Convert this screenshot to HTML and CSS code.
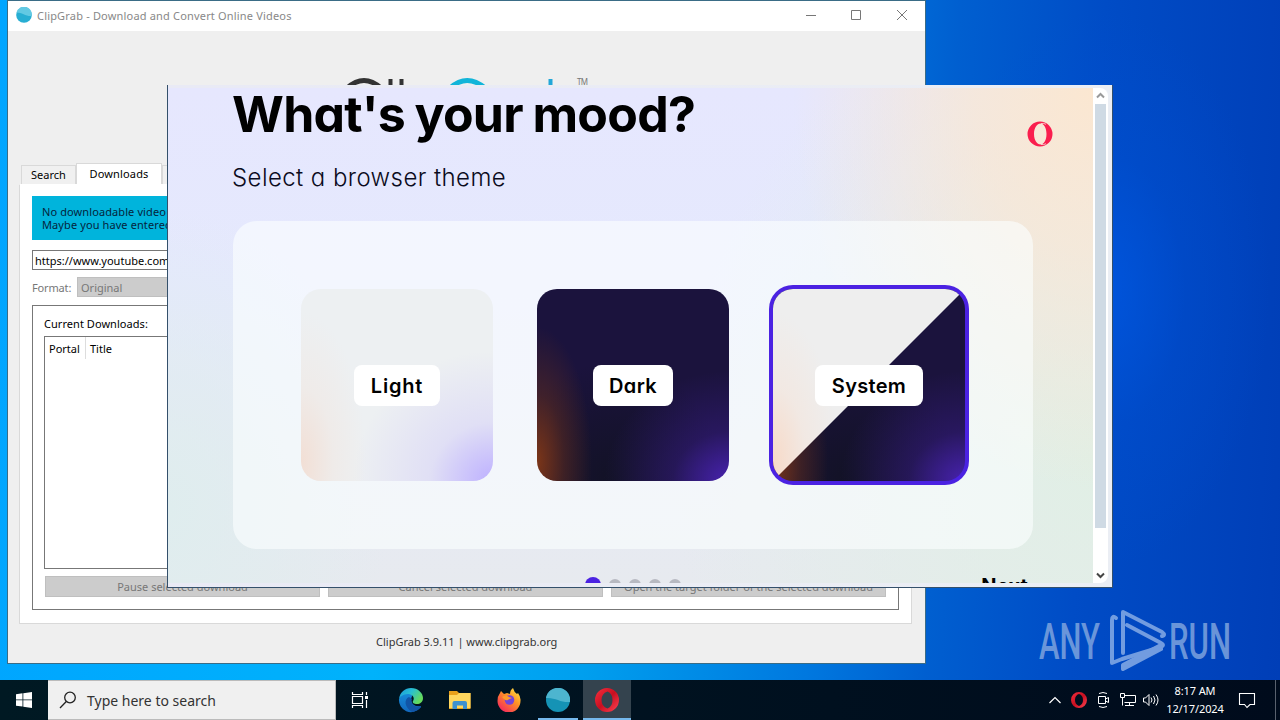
FILE: index.html
```html
<!DOCTYPE html>
<html lang="en">
<head>
    <meta charset="UTF-8">
    <meta name="viewport" content="width=device-width, initial-scale=1.0">
    <title>Desktop</title>
    <link rel="stylesheet" href="styles.css">
</head>
<body>

    <main class="desktop">

        <!-- ClipGrab window -->
        <section class="clipgrab">
            <header class="titlebar">
                <svg class="app-icon" width="16" height="16" viewBox="0 0 16 16">
                    <circle cx="8" cy="8" r="7.8" fill="#27aed3"/>
                    <path d="M.5 5.500A7.800 7.800 0 0 1 15.700 9C10 9.500 6 5.500 .5 5.500z" fill="#62c9e3"/>
                </svg>
                <span class="title-text">ClipGrab - Download and Convert Online Videos</span>
                <svg class="controls" width="110" height="16" viewBox="0 0 110 16" fill="none" stroke="#777">
                    <path d="M1 8.500h10M46.500 3.500h9v9h-9zM92 3l10 10M102 3l-10 10"/>
                </svg>
            </header>

            <div class="logo">
                <svg width="260" height="60" viewBox="0 0 260 60">
                    <g fill="none" stroke-width="5">
                        <path d="M12 14Q29 -1 46 14" stroke="#333"/>
                        <path d="M55.500 5v20M66.500 5v20" stroke="#333" stroke-width="4"/>
                        <path d="M115 14Q132 -1 150 14" stroke="#12b5d9"/>
                        <path d="M215.500 5v20" stroke="#22a7d8" stroke-width="4"/>
                    </g>
                    <text class="tm" x="242" y="11" textLength="11">TM</text>
                </svg>
            </div>

            <nav class="tabs">
                <span class="tab tab-search">Search</span>
                <span class="tab active">Downloads</span>
                <span class="tab tab-last"></span>
            </nav>

            <div class="pane">
                <div class="notice">No downloadable video could be found.<br>Maybe you have entered the wrong link?</div>
                <div class="url">https://www.youtube.com</div>
                <div class="format">
                    <span class="format-label">Format:</span>
                    <span class="select">Original</span>
                </div>
                <div class="group">
                    <p class="group-title">Current Downloads:</p>
                    <div class="list">
                        <span class="col portal">Portal</span>
                        <span class="col">Title</span>
                    </div>
                    <div class="actions">
                        <span class="action">Pause selected download</span>
                        <span class="action">Cancel selected download</span>
                        <span class="action">Open the target folder of the selected download</span>
                    </div>
                </div>
            </div>

            <footer class="about">ClipGrab 3.9.11 | www.clipgrab.org</footer>
        </section>

        <!-- Opera welcome window -->
        <section class="opera">
            <div class="page">
                <div class="page-head">
                    <div>
                        <h1>What's your mood?</h1>
                        <h2>Select a browser theme</h2>
                    </div>
                    <svg class="opera-logo" width="26" height="26" viewBox="0 0 26 26">
                        <path fill="#fa1e4e" fill-rule="evenodd" d="M13 .5a12.500 12.500 0 1 0 0 25a12.500 12.500 0 1 0 0-25zM13.500 2.500c3.400 0 6 4.500 6 10.500s-2.600 10.500-6 10.500S7 19 7 13 10.100 2.500 13.500 2.500z"/>
                        <path d="M14 2.500q3-.5 5 .8M14 23.500q3 .5 5-.8" fill="none" stroke="#f3e9dc" stroke-width=".8"/>
                    </svg>
                </div>
                <div class="themes">
                    <div class="theme light"><span class="name">Light</span></div>
                    <div class="theme dark"><span class="name">Dark</span></div>
                    <div class="theme system"><span class="name">System</span></div>
                </div>
                <div class="page-foot">
                    <div class="dots">
                        <i class="dot current"></i><i class="dot"></i><i class="dot"></i><i class="dot"></i><i class="dot"></i>
                    </div>
                    <span class="next">Next</span>
                </div>
            </div>
            <div class="scrollbar">
                <svg width="15" height="15" viewBox="0 0 15 15" fill="none" stroke="#999" stroke-width="2"><path d="M4 9.500l3.500-3.500L11 9.500"/></svg>
                <div class="thumb"></div>
                <svg width="15" height="15" viewBox="0 0 15 15" fill="none" stroke="#444" stroke-width="2"><path d="M4 5.500L7.500 9 11 5.500"/></svg>
            </div>
        </section>

        <!-- Watermark -->
        <svg class="watermark" width="196" height="66" viewBox="0 0 196 66">
            <g class="brand">
                <text transform="translate(2 51) scale(.58 1)" textLength="105" lengthAdjust="spacingAndGlyphs">ANY</text>
                <text transform="translate(132 51) scale(.58 1)" textLength="107" lengthAdjust="spacingAndGlyphs">RUN</text>
            </g>
            <g fill="none" stroke="#8fb2e8" stroke-width="4" stroke-linejoin="round" stroke-linecap="round" opacity=".8">
                <path d="M79 10q-4-3-4 2v43l10-4L124 39q4-2 0-4L90 17"/>
                <path d="M86 45V4l39 20q4 3 0 4"/>
                <path d="M124 41L86 61v-4l38-20"/>
            </g>
        </svg>
    </main>

    <!-- Taskbar -->
    <footer class="taskbar">
        <div class="start">
            <svg width="16" height="16" viewBox="0 0 16 16" fill="#fff"><path d="M0 2.200l6.500-.9v6.200H0zM7.300 1.200L16 0v7.500H7.300zM0 8.300h6.500v6.300L0 13.700zM7.300 8.300H16V16l-8.700-1.200z"/></svg>
        </div>
        <div class="search">
            <svg width="18" height="18" viewBox="0 0 18 18" fill="none" stroke="#222" stroke-width="1.300"><circle cx="11" cy="6.500" r="5.300"/><path d="M7.300 10.500L1 17"/></svg>
            <span>Type here to search</span>
        </div>
        <div class="apps">
            <div class="app">
                <svg width="18" height="18" viewBox="0 0 18 18" fill="none" stroke="#fff" stroke-width="1.200"><path d="M1.500 1v2.500h10V1M1.500 5.500h10v7h-10zM1.500 17v-2.500h10V17M15.500 1v3M15.500 9v8"/><path d="M14 5h3v3h-3z" fill="#fff" stroke="none"/></svg>
            </div>
            <div class="app">
                <svg width="26" height="26" viewBox="0 0 26 26">
                    <defs>
                        <linearGradient id="edge" x1="0" y1="0" x2="1" y2=".5"><stop offset="0" stop-color="#1a98dc"/><stop offset=".5" stop-color="#28bfd3"/><stop offset="1" stop-color="#65db5c"/></linearGradient>
                        <linearGradient id="edge-low" x1="0" y1="0" x2="0" y2="1"><stop offset="0" stop-color="#168bd9"/><stop offset="1" stop-color="#1268bd"/></linearGradient>
                    </defs>
                    <path d="M1 12a12 12 0 0 0 21 9q2-2 0-2c-5 1-9-2-9-7l2-6H4z" fill="url(#edge-low)"/>
                    <path d="M11 10c-5 2-5 10 3 15q5-.5 8-4 2-2 0-2c-6 2-10-3-8-7z" fill="#1155a6"/>
                    <path d="M1 12C2 5 7 1 13 1c7 0 12 5 12 10 0 4-3 6-6 6-3 0-5-1-4-3 2-3 0-6-4-7-4 0-8 1-10 5z" fill="url(#edge)"/>
                </svg>
            </div>
            <div class="app">
                <svg width="22" height="20" viewBox="0 0 22 20"><path d="M0 1h8l2 2h11.500v16H0z" fill="#e9a11b"/><path d="M0 5h8l2-2h11.500v15H0z" fill="#ffd75e"/><path d="M3.500 19v-6q0-2 2-2H16q2 0 2 2v6h-4v-3.500H8V19z" fill="#3e91d0"/></svg>
            </div>
            <div class="app">
                <svg width="24" height="24" viewBox="0 0 24 24">
                    <defs><linearGradient id="fox" x1="1" y1="0" x2=".2" y2="1"><stop offset="0" stop-color="#fff14a"/><stop offset=".45" stop-color="#ff9425"/><stop offset="1" stop-color="#f5235f"/></linearGradient></defs>
                    <path d="M4 3l3 3 3-1q0 0 3 1 0-4 3-6 1 4 4 6l1-1q3 4 2.500 8A11.500 11.500 0 0 1 .5 13q0-5 2.500-8z" fill="url(#fox)"/>
                    <circle cx="12.500" cy="12" r="4.800" fill="#7544d8"/>
                    <path d="M5 9q4-3 7 0l3 1q-3 1-4 2-2 1-4-1z" fill="#ff9a2b"/>
                </svg>
            </div>
            <div class="app open-app">
                <svg width="24" height="24" viewBox="0 0 24 24"><circle cx="12" cy="12" r="12" fill="#1593b5"/><path d="M0 10A12 12 0 0 1 24 14C15 15 9 9 0 10z" fill="#4db5cf"/></svg>
            </div>
            <div class="app focused">
                <svg width="24" height="24" viewBox="0 0 24 24">
                    <defs><linearGradient id="red" x1="0" y1="0" x2="1" y2="1"><stop offset="0" stop-color="#f5303f"/><stop offset=".5" stop-color="#c90f20"/><stop offset="1" stop-color="#ff4555"/></linearGradient></defs>
                    <path fill="url(#red)" fill-rule="evenodd" d="M12 0a12 12 0 1 0 0 24a12 12 0 1 0 0-24zM12.500 3.500q5 2 5 8.500t-5 8.500q-6-2-6-8.500t6-8.500z"/>
                </svg>
            </div>
        </div>
        <div class="tray">
            <svg width="14" height="14" viewBox="0 0 14 14" fill="none" stroke="#fff" stroke-width="1.200"><path d="M1.500 10L7 4.500l5.500 5.500"/></svg>
            <svg width="16" height="16" viewBox="0 0 24 24"><path fill="url(#red)" fill-rule="evenodd" d="M12 0a12 12 0 1 0 0 24a12 12 0 1 0 0-24zM12 3q6 2 6 9t-6 9q-6-2-6-9t6-9z"/></svg>
            <svg width="14" height="18" viewBox="0 0 14 18" fill="none" stroke="#fff"><path d="M2.500 5.500h7v7h-7zM9.500 8l3-1.500v5l-3-1.500M3 2.500q4-2 8 0M3 15.500q4 2 8 0"/></svg>
            <svg width="18" height="16" viewBox="0 0 18 16" fill="none" stroke="#fff"><path d="M5.500 3.500h11v7h-11M10.500 10.500v3M6 13.500h9M1.500 1.500h4v4h-4zM3.500 5.500v8"/></svg>
            <svg class="volume" width="18" height="16" viewBox="0 0 18 16" fill="none" stroke="#fff"><path d="M1.500 6h2L7 2.500v11L3.500 10h-2zM9 5.500q2 2.500 0 5M11.500 4q3 4 0 8M14 2.500q4 5.500 0 11"/></svg>
        </div>
        <div class="clock"><span>8:17 AM</span><span>12/17/2024</span></div>
        <svg class="bell" width="18" height="18" viewBox="0 0 18 18" fill="none" stroke="#fff" stroke-width="1.100"><path d="M1.500 2.500h15v11H12L9 16.500l-2.500-3h-5z"/></svg>
        <div class="peek"></div>
    </footer>

</body>
</html>
```

FILE: styles.css
```css
* {
    margin: 0;
    padding: 0;
    box-sizing: border-box;
}

body {
    width: 1280px;
    height: 720px;
    overflow: hidden;
    font-family: 'Noto Sans', 'Open Sans', sans-serif;
    font-size: 11px;
    color: #000;
}

.desktop {
    position: relative;
    height: 680px;
    overflow: hidden;
    background:
        radial-gradient(ellipse 170px 280px at 1100px 290px, rgba(0, 88, 228, 0.75), rgba(0, 80, 215, 0.3) 50%, rgba(0, 70, 200, 0)),
        linear-gradient(93deg, #00a5ff 0, #00b2fb 31%, #009fee 47%, #0078df 64%, #005fd0 73%, #004cc6 84%, #003eb7 100%);
}

/* ClipGrab */
.clipgrab {
    position: absolute;
    left: 7px;
    top: 0;
    width: 919px;
    height: 664px;
    display: flex;
    flex-direction: column;
    border: 1px solid #3a6c86;
    background: #efefef;
}

.titlebar {
    height: 30px;
    display: flex;
    align-items: center;
    padding: 0 10px 2px 8px;
    background: #fff;
    flex-shrink: 0;
}

.title-text {
    margin-left: 5px;
    flex: 1;
    color: #888;
    white-space: nowrap;
    letter-spacing: 0.18px;
}

.logo {
    height: 132px;
    padding: 43px 0 0 327px;
}

.tm {
    font-size: 8px;
    fill: #777;
}

.tabs {
    height: 21px;
    display: flex;
    align-items: flex-end;
    padding-left: 13px;
}

.tab {
    height: 19px;
    border: 1px solid #d9d9d9;
    border-bottom: 0;
    line-height: 18px;
    text-align: center;
    background: #f0f0f0;
}

.tab-search {
    width: 55px;
}

.tab.active {
    width: 86px;
    height: 21px;
    line-height: 20px;
    background: #fff;
    letter-spacing: 0.15px;
}

.tab-last {
    width: 90px;
}

.pane {
    width: 893px;
    height: 440px;
    margin-left: 11px;
    padding: 11px 12px;
    border: 1px solid #d9d9d9;
    border-top-color: #fff;
    background: #fff;
}

.notice {
    height: 44px;
    padding: 9px 10px;
    background: #00b4dc;
    color: #05253c;
    line-height: 13px;
    white-space: nowrap;
    letter-spacing: 0.1px;
}

.url {
    height: 20px;
    margin-top: 10px;
    padding-left: 2px;
    border: 1px solid #777;
    line-height: 19px;
}

.format {
    display: flex;
    height: 20px;
    margin-top: 7px;
    line-height: 21px;
    color: #777;
}

.format-label {
    width: 45px;
    letter-spacing: -0.15px;
}

.select {
    flex: 1;
    padding-left: 3px;
    border: 1px solid #bfbfbf;
    background: #ccc;
    line-height: 19px;
}

.group {
    width: 867px;
    height: 305px;
    margin-top: 8px;
    padding: 10px 12px 0 11px;
    border: 1px solid #777;
}

.group-title {
    height: 20px;
    line-height: 16px;
    letter-spacing: 0.05px;
}

.list {
    display: flex;
    height: 233px;
    border: 1px solid #777;
}

.col {
    height: 22px;
    padding-left: 4px;
    line-height: 23px;
}

.portal {
    width: 41px;
    border-right: 1px solid #ddd;
}

.actions {
    display: flex;
    gap: 8px;
    margin-top: 7px;
    padding-left: 1px;
}

.action {
    width: 275px;
    height: 21px;
    border: 1px solid #bfbfbf;
    background: #ccc;
    color: #777;
    line-height: 20px;
    text-align: center;
    white-space: nowrap;
}

.about {
    height: 38px;
    padding-left: 368px;
    line-height: 36px;
    color: #333;
}

/* Opera */
.opera {
    position: absolute;
    left: 167px;
    top: 85px;
    width: 946px;
    height: 503px;
    display: flex;
    padding: 3px 3px 4px 0;
    border: 1px solid #34506b;
    border-top: 0;
    background: linear-gradient(90deg, #e9eaf5, #ebeef4);
}

.page {
    width: 925px;
    height: 495px;
    overflow: hidden;
    padding: 0 60px 0 65px;
    background:
        radial-gradient(ellipse 300px 400px at 100% 0, #fbe7d1 0, rgba(251, 231, 209, 0.7) 40%, rgba(251, 231, 209, 0) 100%),
        radial-gradient(ellipse 220px 300px at 0 85%, #dfedee 0, rgba(223, 237, 238, 0) 100%),
        radial-gradient(ellipse 420px 480px at 100% 75%, #e1efe5 0, rgba(226, 238, 229, 0) 100%),
        linear-gradient(180deg, #e6e7fe 0, #e5e9fd 40%, #e7eaef 100%);
}

.page-head {
    display: flex;
    justify-content: space-between;
    height: 133px;
    margin-right: -20px;
}

h1 {
    height: 62px;
    margin-left: -1px;
    font: 700 50px/53px Inter, sans-serif;
    font-feature-settings: "cv11";
    letter-spacing: -0.75px;
    word-spacing: -1.5px;
    white-space: nowrap;
}

h2 {
    margin-left: -1px;
    font: 300 24px/56px Inter, sans-serif;
    font-feature-settings: "cv11";
    letter-spacing: 0.42px;
    color: #0b0b20;
    white-space: nowrap;
}

.opera-logo {
    margin-top: 33px;
}

.themes {
    width: 800px;
    height: 328px;
    display: flex;
    align-items: center;
    gap: 44px;
    padding-left: 68px;
    border-radius: 24px;
    background: rgba(251, 255, 255, 0.6);
}

.theme {
    width: 192px;
    height: 192px;
    display: flex;
    align-items: center;
    justify-content: center;
    border-radius: 20px;
}

.light {
    background:
        radial-gradient(ellipse 65px 150px at 0 90%, #f2dfd5, rgba(242, 228, 220, 0.4) 50%, rgba(242, 228, 220, 0)),
        radial-gradient(ellipse 140px 130px at 100% 100%, #bdb0ff, rgba(205, 198, 250, 0.4) 45%, rgba(220, 215, 245, 0)),
        #edf0f2;
}

.dark,
.system {
    background:
        radial-gradient(ellipse 55px 135px at 0 90%, #7b3518, rgba(100, 46, 26, 0.5) 50%, rgba(60, 30, 40, 0)),
        radial-gradient(ellipse 125px 110px at 100% 100%, #4722ae, rgba(60, 30, 145, 0.4) 45%, rgba(40, 25, 90, 0)),
        radial-gradient(ellipse 110px 120px at 40% 100%, #121225, rgba(18, 18, 37, 0)),
        #1b133d;
}

.system {
    position: relative;
    isolation: isolate;
    box-shadow: 0 0 0 4px #4b22e2;
}

/* light half laid over the dark one */
.system::before {
    content: "";
    position: absolute;
    inset: 0;
    z-index: -1;
    border-radius: 20px;
    clip-path: polygon(0 0, 100% 0, 0 100%);
    background:
        radial-gradient(ellipse 65px 150px at 0 90%, #f7dac8, rgba(247, 224, 210, 0.4) 50%, rgba(247, 224, 210, 0)),
        #eee;
}

.name {
    height: 41px;
    padding: 0 16.5px;
    border-radius: 8px;
    background: #fff;
    font: 600 20px/43px Inter, sans-serif;
    font-feature-settings: "cv11";
    letter-spacing: 0.3px;
}

.light .name {
    letter-spacing: 0.8px;
}

.page-foot {
    display: flex;
    justify-content: space-between;
    padding: 28px 5px 0 352px;
}

.dots {
    display: flex;
    gap: 8px;
    align-items: center;
    height: 16px;
}

.dot {
    width: 12px;
    height: 12px;
    border-radius: 50%;
    background: #b7b9c1;
}

.dot.current {
    width: 16px;
    height: 16px;
    background: #4b22e2;
}

.next {
    margin-top: -3px;
    font: 700 20px/24px Inter, sans-serif;
    letter-spacing: 0.2px;
}

.scrollbar {
    width: 15px;
    height: 495px;
    display: flex;
    flex-direction: column;
    border-radius: 0 8px 8px 0;
    background: #fff;
}

.thumb {
    width: 11px;
    flex: 0 0 424px;
    margin: 1px 0 40px 2px;
    background: #cfdae4;
}

.watermark {
    position: absolute;
    left: 1037px;
    top: 608px;
}

.brand {
    font: 500 50px 'Roboto', sans-serif;
    fill: #7da3de;
    opacity: 0.85;
}

/* Taskbar */
.taskbar {
    height: 40px;
    display: flex;
    align-items: center;
    background: linear-gradient(90deg, #001923, #00101f 65%, #000b1c);
    color: #fff;
}

.start {
    width: 48px;
    display: flex;
    justify-content: center;
}

.search {
    width: 288px;
    height: 40px;
    display: flex;
    align-items: center;
    gap: 10px;
    padding-left: 11px;
    border: 1px solid #bbb;
    border-left-width: 0;
    background: #f0f0f0;
    color: #333;
    font-size: 14px;
}

.apps {
    display: flex;
    width: 712px;
}

.app {
    width: 49px;
    height: 40px;
    display: flex;
    align-items: center;
    justify-content: center;
}

.app:first-child {
    padding-right: 1px;
}

.app:nth-child(2) {
    width: 50px;
    padding-left: 2px;
}

.open-app {
    background: linear-gradient(#76b9ed, #76b9ed) 5px 38px / 40px 2px no-repeat;
}

.focused {
    width: 48px;
    margin-left: 1px;
    background: linear-gradient(#76b9ed, #76b9ed) 0 38px / 48px 2px no-repeat #34434e;
}

.tray {
    display: flex;
    align-items: center;
    gap: 9px;
    width: 116px;
}

.volume {
    margin-left: -4px;
}

.clock {
    width: 62px;
    display: flex;
    flex-direction: column;
    align-items: center;
    line-height: 18px;
    letter-spacing: -0.1px;
}

.bell {
    margin-left: 12px;
}

.peek {
    width: 1px;
    height: 40px;
    margin-left: auto;
    margin-right: 4px;
    background: #59616e;
}
```
